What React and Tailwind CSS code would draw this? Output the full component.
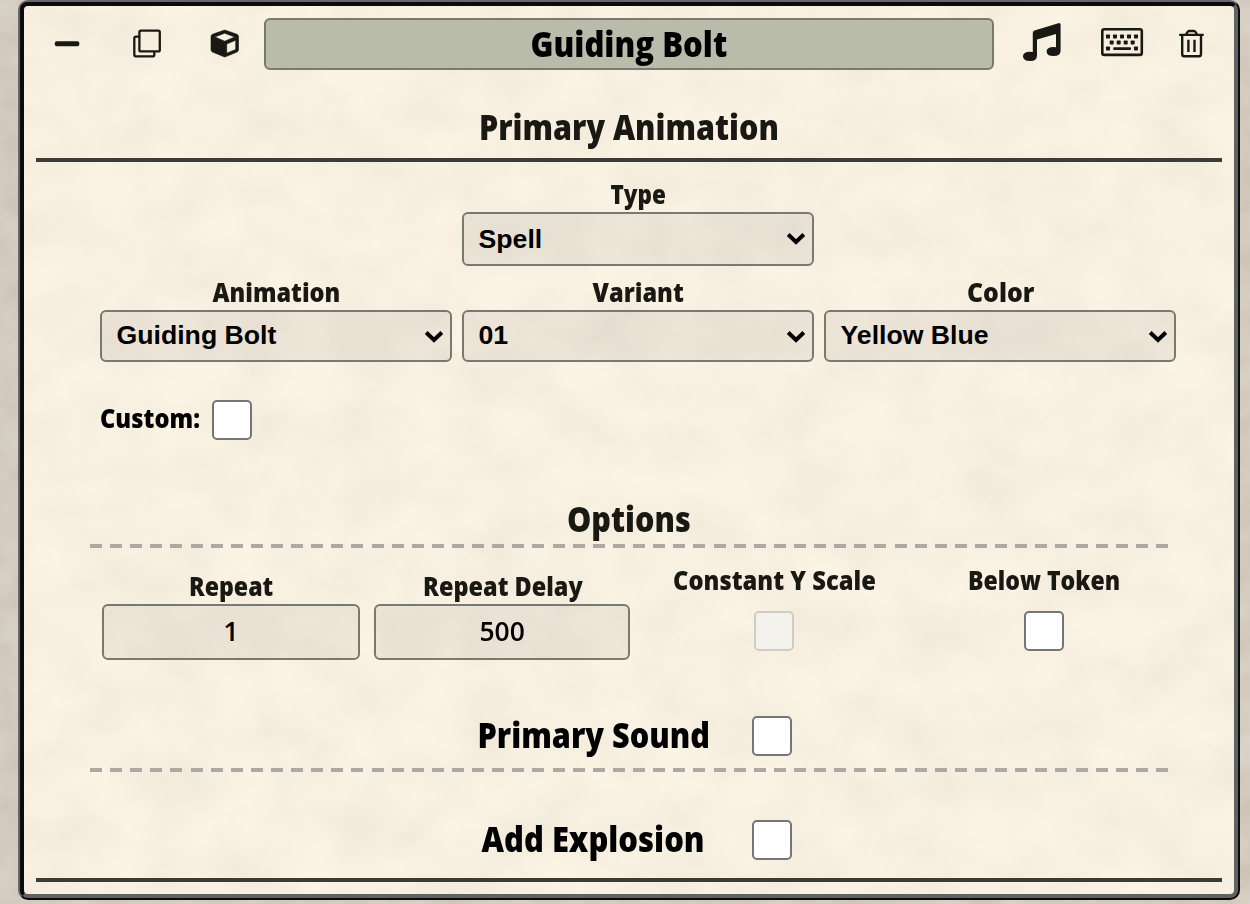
import { useLayoutEffect, useRef, useState } from "react";

/* Scales a line of text horizontally so that it takes exactly the given width. */
function Fit({ width, className = "", children }) {
  const ref = useRef(null);
  const [scale, setScale] = useState(1);
  useLayoutEffect(() => {
    setScale(width / ref.current.offsetWidth);
  }, [width]);
  return (
    <span className={"flex justify-center " + className} style={{ width }}>
      <span ref={ref} className="shrink-0 whitespace-nowrap" style={{ transform: `scaleX(${scale})` }}>
        {children}
      </span>
    </span>
  );
}

function Heading({ width, children }) {
  return (
    <h2 className="flex h-[37px] items-center justify-center text-[35px] leading-none font-[770] text-[#191813]">
      <Fit width={width}>{children}</Fit>
    </h2>
  );
}

function Label({ width, children }) {
  return (
    <span className="flex h-[27px] items-center justify-center pl-px text-[27px] leading-none font-[770] text-[#191813]">
      <Fit width={width}>{children}</Fit>
    </span>
  );
}

function Select({ label, labelWidth, value, tall }) {
  return (
    <div className="flex w-[352px] flex-col">
      <Label width={labelWidth}>{label}</Label>
      <div
        className={
          "mt-[5px] flex items-center justify-between rounded-[6px] border-2 border-[#7a7971] bg-[#201838]/6 pr-[6px] pl-[14.500px] " +
          (tall ? "h-[54px]" : "h-[52px] pb-px")
        }
      >
        <span className="font-['Liberation_Sans',sans-serif] text-[26.67px] leading-none font-bold text-black">{value}</span>
        <svg className={tall ? "h-[14px] w-5" : "mt-[2px] h-[14px] w-5"} viewBox="0 0 20 14" fill="none" stroke="#000" strokeWidth="4">
          <path d="M2.200 2.500 10 10l7.800-7.500" />
        </svg>
      </div>
    </div>
  );
}

function Check({ disabled }) {
  return (
    <span
      className={
        "block size-10 shrink-0 rounded-[5px] border-2 " +
        (disabled ? "border-[#cfccc6] bg-[#f4f2ed]" : "border-[#767676] bg-white")
      }
    />
  );
}

function NumberBox({ label, labelWidth, value, valueWidth, className }) {
  return (
    <div className={"mt-6 flex flex-col " + className}>
      <Label width={labelWidth}>{label}</Label>
      <div className="mt-[5px] flex h-14 items-center justify-center rounded-[6px] border-2 border-[#7a7971] bg-[#201838]/6 pb-[3px] text-[27px] leading-none font-semibold text-black">
        <Fit width={valueWidth}>{value}</Fit>
      </div>
    </div>
  );
}

function Dashes() {
  return (
    <div className="ml-[66px] h-1 w-[1078px] bg-[repeating-linear-gradient(90deg,#aca9a2_0px,#aca9a2_12px,transparent_12px,transparent_20.113px)]" />
  );
}

function ToggleRow({ label, width, className }) {
  return (
    <div className={"flex h-10 items-center " + className}>
      <span className="-mt-[3px] flex w-[283px] justify-center text-[35px] leading-none font-[770] text-black">
        <Fit width={width}>{label}</Fit>
      </span>
      <Check />
    </div>
  );
}

function Paper({ id, frequency, light, seed }) {
  return (
    <svg className="pointer-events-none absolute inset-0 h-full w-full" aria-hidden="true">
      <filter id={id} x="0" y="0" width="100%" height="100%" colorInterpolationFilters="sRGB">
        <feTurbulence type="fractalNoise" baseFrequency={frequency} numOctaves="5" seed={seed} />
        <feColorMatrix values={light} />
      </filter>
      <rect width="100%" height="100%" filter={`url(#${id})`} />
    </svg>
  );
}

function Header() {
  return (
    <div className="flex h-[52px] items-center">
      <svg className="ml-[30px] h-[6px] w-[26px]" viewBox="0 0 26 6">
        <rect x="0.800" y="0.200" width="24.500" height="5" rx="1.800" fill="#191813" />
      </svg>
      <svg className="ml-[52px] size-[32px]" viewBox="0 0 32 32" fill="none" stroke="#191813" strokeWidth="2.300">
        <rect x="7.400" y="2.600" width="20.400" height="20.800" rx="1.500" />
        <path d="M7.400 8.600H4Q2.300 8.600 2.300 10.300V26.500Q2.300 28.400 4 28.400H20.500Q22.300 28.400 22.300 26.700V23.500" />
      </svg>
      <svg className="ml-[46px] size-[30px]" viewBox="0 0 30 30">
        <path
          fill="#191813"
          stroke="#191813"
          strokeWidth="0.600"
          strokeLinejoin="round"
          fillRule="evenodd"
          d="M14 1.200Q14.700 1 15.400 1.200L27 5.300Q28.500 6 28.500 7.500V20.700Q28.500 22.200 27.200 22.900L15.500 27.800Q14.700 28.100 14 27.800L2.300 22.900Q1 22.200 1 20.700V7.500Q1 6 2.400 5.300ZM14.700 4.200 4.800 7.900 14.700 12.200 24.700 7.900ZM16.700 15.100V24.200L25.700 20.400V11.200Z"
        />
      </svg>
      <div className="ml-[24px] flex h-[52px] w-[730px] items-center justify-center rounded-[6px] border-2 border-[#7a7971] bg-[#b9bbab] pb-px text-[35px] leading-none font-[770] text-black">
        <Fit width={197}>Guiding Bolt</Fit>
      </div>
      <svg className="-mt-[5px] ml-[28px] size-[40px]" viewBox="0 0 40 40" fill="#191813">
        <path d="M10.800 10.800Q10.800 9 12.500 8.400L36.300 1.200Q38.600.6 38.600 2.800V28.500Q38.600 34 31.600 34T24.600 29.500Q24.600 25 31.600 25L34 25.300V12L15 17.600V33.500Q15 39 8 39T1 34.300Q1 29.800 8 29.800L10.800 30.100Z" />
      </svg>
      <svg className="-mt-[4px] ml-[38px] h-[30px] w-[44px]" viewBox="0 0 44 30" fill="#191813">
        <rect x="2.300" y="2.300" width="39.500" height="25.600" rx="2" fill="none" stroke="#191813" strokeWidth="2.600" />
        {[6, 13, 20, 27, 34].map((x) => <rect key={x} x={x} y="7.500" width="4" height="4" rx="0.700" />)}
        {[9.700, 16.700, 23.700, 30.700].map((x) => <rect key={x} x={x} y="13.500" width="4" height="4" rx="0.700" />)}
        <rect x="6" y="19.500" width="4" height="4" rx="0.700" />
        <rect x="13.200" y="20.300" width="17.800" height="2.600" rx="1" />
        <rect x="34" y="19.500" width="4" height="4" rx="0.700" />
      </svg>
      <svg className="-mt-[3px] ml-[33px] size-[30px]" viewBox="0 0 30 30" fill="none" stroke="#191813" strokeWidth="2.400">
        <path d="M2.200 6.900H26.700M5.200 7V26Q5.200 28.300 7.200 28.300H21.900Q24 28.300 24 26V7M9 6.500 10.500 4Q11 3 12.200 3H16.800Q18 3 18.600 4L20 6.500M11.400 11.700V24M17.500 11.700V24" />
      </svg>
    </div>
  );
}

export default function App() {
  return (
    <div className="relative h-[904px] w-[1250px] overflow-hidden bg-[#cec5b8] pl-[18px] font-['Open_Sans','Noto_Sans',sans-serif]">
      <Paper id="backdrop" frequency="0.03" seed="4" light="0 0 0 0 1  0 0 0 0 1  0 0 0 0 1  0.4 0 0 0 -0.1" />
      <div className="relative h-[900px] w-[1222px] rounded-[10px] border-2 border-t-[#66676a] border-r-[#0b0b0c] border-b-[#0b0b0c] border-l-[#66676a] bg-[#0b0b0c]">
        <div className="relative h-full w-full overflow-hidden rounded-[8px] border-4 border-t-[#0b0b0c] border-r-[#616264] border-b-[#616264] border-l-[#0b0b0c] bg-[#fbf4e4]">
          <Paper id="parchment" frequency="0.016 0.02" seed="8" light="0 0 0 0 0.5  0 0 0 0 0.46  0 0 0 0 0.42  0.12 0 0 0 -0.03" />
          <div className="relative flex flex-col pt-3">
            <Header />
            <div className="mt-[38px]">
              <Heading width={300}>Primary Animation</Heading>
            </div>
            <div className="mx-3 mt-[13px] h-1 bg-[#3d3c37]" />
            <div className="mt-[18px] ml-[438px]">
              <Select label="Type" labelWidth={55} value="Spell" tall />
            </div>
            <div className="mt-3 ml-[76px] flex gap-[10px]">
              <Select label="Animation" labelWidth={128} value="Guiding Bolt" />
              <Select label="Variant" labelWidth={91} value="01" />
              <Select label="Color" labelWidth={67} value="Yellow Blue" />
            </div>
            <div className="mt-[38px] ml-[76px] flex h-10 items-center">
              <span className="-mt-[5px] mr-[12px] text-[27px] leading-none font-[770] text-black">
                <Fit width={100}>Custom:</Fit>
              </span>
              <Check />
            </div>
            <div className="mt-[60px] mb-[7px]">
              <Heading width={124}>Options</Heading>
            </div>
            <Dashes />
            <div className="ml-[78px] flex h-[112px]">
              <NumberBox className="w-[258px]" label="Repeat" labelWidth={84} value="1" valueWidth={15} />
              <NumberBox className="ml-[14px] w-64" label="Repeat Delay" labelWidth={160} value="500" valueWidth={45} />
              <div className="mt-[18px] ml-[9px] flex w-[270px] flex-col items-center gap-[18px]">
                <Label width={203}>Constant Y Scale</Label>
                <Check disabled />
              </div>
              <div className="mt-[18px] flex w-[270px] flex-col items-center gap-[18px]">
                <Label width={152}>Below Token</Label>
                <Check />
              </div>
            </div>
            <ToggleRow className="mt-14 mb-3 ml-[428px] gap-[17px]" label="Primary Sound" width={233} />
            <Dashes />
            <ToggleRow className="mt-12 mb-[18px] ml-[428px] gap-[17px]" label="Add Explosion" width={223} />
            <div className="mx-3 h-1 bg-[#3b3b38]" />
          </div>
        </div>
      </div>
    </div>
  );
}
